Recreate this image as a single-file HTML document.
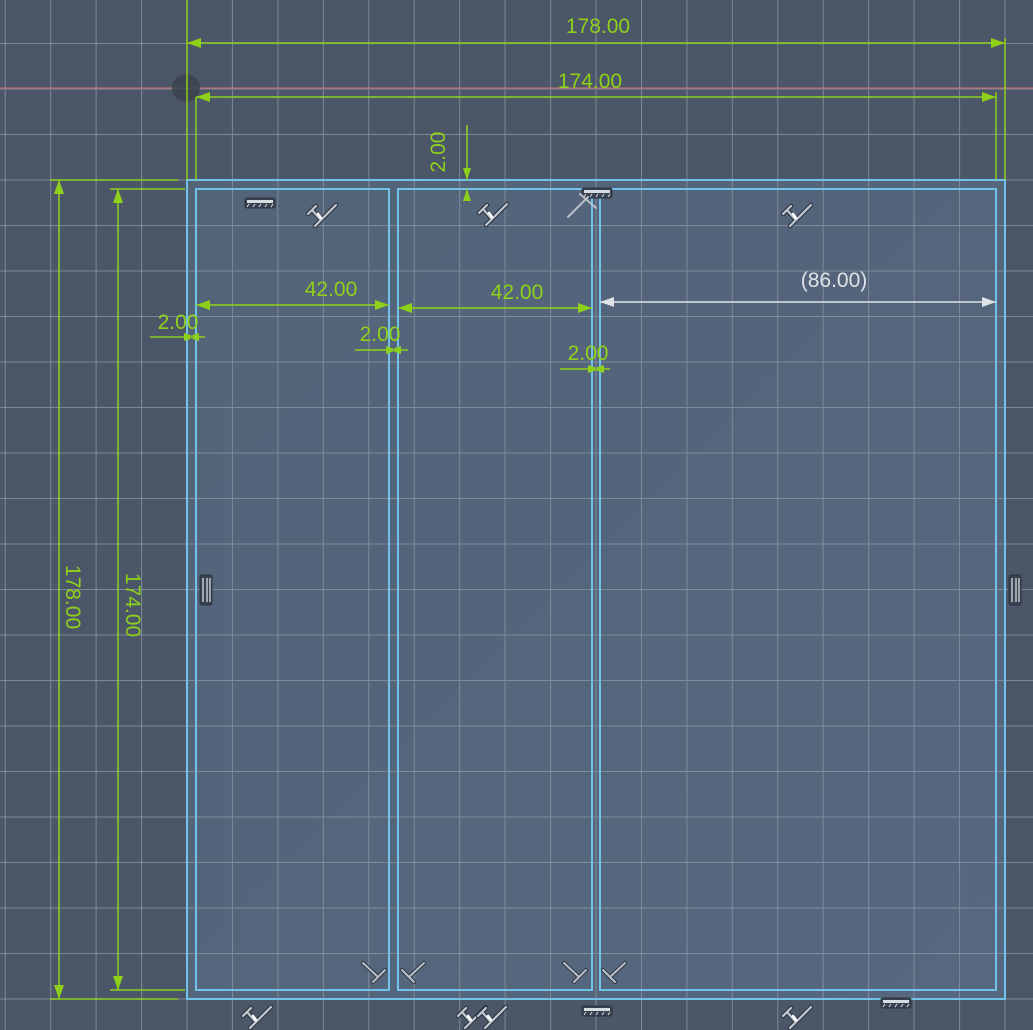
<!DOCTYPE html>
<html><head><meta charset="utf-8"><style>
html,body{margin:0;padding:0;background:#4b5668;overflow:hidden}
svg{display:block}
text{font-family:"Liberation Sans",sans-serif;font-size:21px}
</style></head><body>
<svg width="1033" height="1030" viewBox="0 0 1033 1030" xmlns="http://www.w3.org/2000/svg">
<defs>
<linearGradient id="pn" x1="0" y1="0" x2="1" y2="1">
<stop offset="0" stop-color="#536378"/><stop offset="1" stop-color="#56677f"/>
</linearGradient>
<g id="gh"><rect x="-15" y="-5" width="30" height="10" rx="2" fill="#3a4250" stroke="#2c3340"/><rect x="-13" y="-3" width="26" height="3" fill="#d8dde4"/><path d="M-11 1l-2 3M-5 1l-2 3M1 1l-2 3M7 1l-2 3M13 1l-2 3" stroke="#d8dde4" stroke-width="1"/></g>
<g id="gv"><rect x="-5" y="-15" width="12" height="30" rx="2" fill="#3a4250" stroke="#2c3340"/><path d="M-2 -12V12M2 -12V12M5 -12V12" stroke="#d8dde4" stroke-width="1.3"/></g>
<g id="tg" fill="none" stroke-linecap="round"><path d="M-15 2L-7 -6M-11 -2L-3 7M-8 14L13 -7" stroke="#2f3744" stroke-width="4.5"/><path d="M-15 2L-7 -6M-11 -2L-3 7M-8 14L13 -7" stroke="#c3c9d1" stroke-width="2.2"/><path d="M-5 2L-2 6" stroke="#fff" stroke-width="2.5"/></g>
<g id="ck" fill="none" stroke-linecap="round"><path d="M-12 -11L3 3M-2 8L10 -4" stroke="#2f3744" stroke-width="4"/><path d="M-12 -11L3 3M-2 8L10 -4" stroke="#b9c0c9" stroke-width="2"/></g>
</defs>
<rect width="1033" height="1030" fill="#4b5668"/>
<rect x="187" y="180" width="818" height="819" fill="url(#pn)"/>
<g stroke="#8a95a4" stroke-width="1" opacity="0.8">
<path d="M5.2 0V1030M50.7 0V1030M96.1 0V1030M141.6 0V1030M187 0V1030M232.4 0V1030M277.9 0V1030M323.3 0V1030M368.8 0V1030M414.2 0V1030M459.7 0V1030M505.1 0V1030M550.6 0V1030M596 0V1030M641.5 0V1030M686.9 0V1030M732.3 0V1030M777.8 0V1030M823.2 0V1030M868.7 0V1030M914.1 0V1030M959.6 0V1030M1005 0V1030"/>
<path d="M0 43.5H1033M0 89H1033M0 134.5H1033M0 180H1033M0 225.5H1033M0 271H1033M0 316.5H1033M0 362H1033M0 407.5H1033M0 453H1033M0 498.5H1033M0 544H1033M0 589.5H1033M0 635H1033M0 680.5H1033M0 726H1033M0 771.5H1033M0 817H1033M0 862.5H1033M0 908H1033M0 953.5H1033M0 999H1033"/>
</g>
<line x1="0" y1="88" x2="1033" y2="88" stroke="#d0706c" stroke-width="1"/>
<circle cx="186" cy="88" r="14" fill="#3a414c" opacity="0.8"/>
<g fill="none" stroke="#6fc3ea" stroke-width="2">
<rect x="187" y="180" width="818" height="819"/>
<rect x="196" y="189" width="193" height="801"/>
<rect x="398" y="189" width="194" height="801"/>
<rect x="600" y="189" width="396" height="801"/>
</g>
<g stroke="#8fd11a" stroke-width="1.5" fill="none">
<path d="M187 0V180M196 97V180M1005 38V180M996 92V180"/>
<path d="M187 43H1005M196 97H996"/>
<path d="M467 125V180M467 189V198"/>
<path d="M196 305H389M398 308H592"/>
<path d="M150 337H205M355 350H408M560 369H610"/>
<path d="M50 180H178M50 999H178M110 189H185M110 990H185"/>
<path d="M59 180V999M118 189V990"/>
</g>
<g fill="#8fd11a">
<path d="M187 43l14 -5v10zM1005 43l-14 -5v10z"/>
<path d="M196 97l14 -5v10zM996 97l-14 -5v10z"/>
<path d="M467 180l-4 -12h8zM467 189l-4 12h8z"/>
<path d="M196 305l14 -5v10zM389 305l-14 -5v10zM398 308l14 -5v10zM592 308l-14 -5v10z"/>
<path d="M196 337l-12 -4v8zM187 337l12 -4v8z"/>
<path d="M398 350l-12 -4v8zM389 350l12 -4v8z"/>
<path d="M600 369l-12 -4v8zM592 369l12 -4v8z"/>
<path d="M59 180l-5 14h10zM59 999l-5 -14h10zM118 189l-5 14h10zM118 990l-5 -14h10z"/>
<text x="598" y="33" text-anchor="middle">178.00</text>
<text x="590" y="88" text-anchor="middle">174.00</text>
<text x="331" y="296" text-anchor="middle">42.00</text>
<text x="517" y="299" text-anchor="middle">42.00</text>
<text x="178" y="329" text-anchor="middle">2.00</text>
<text x="380" y="341" text-anchor="middle">2.00</text>
<text x="588" y="360" text-anchor="middle">2.00</text>
<text transform="translate(445,152) rotate(-90)" text-anchor="middle">2.00</text>
<text transform="translate(66,597) rotate(90)" text-anchor="middle">178.00</text>
<text transform="translate(126,605) rotate(90)" text-anchor="middle">174.00</text>
</g>
<path d="M600 302H996" stroke="#dfe3e8" stroke-width="1.5"/>
<path d="M600 302l14 -5v10zM996 302l-14 -5v10z" fill="#dfe3e8"/>
<text x="834" y="287" text-anchor="middle" fill="#dfe3e8">(86.00)</text>
<use href="#gh" x="260" y="203"/>
<use href="#gh" x="597" y="193"/>
<use href="#gh" x="597" y="1011"/>
<use href="#gh" x="896" y="1003"/>
<use href="#gv" x="205" y="590"/>
<use href="#gv" x="1014" y="590"/>
<use href="#tg" x="323" y="212"/>
<use href="#tg" x="494" y="211"/>
<use href="#tg" x="798" y="212"/>
<use href="#tg" x="258" y="1014"/>
<use href="#tg" x="473" y="1014"/>
<use href="#tg" x="493" y="1014"/>
<use href="#tg" x="798" y="1014"/>
<path d="M568 217L588 197M580 194L596 208" stroke="#b9c0c9" stroke-width="2" stroke-linecap="round"/>
<use href="#ck" x="375" y="974"/>
<use href="#ck" x="576" y="974"/>
<g transform="translate(412,974) scale(-1,1)"><use href="#ck"/></g>
<g transform="translate(613,974) scale(-1,1)"><use href="#ck"/></g>
</svg>
</body></html>
